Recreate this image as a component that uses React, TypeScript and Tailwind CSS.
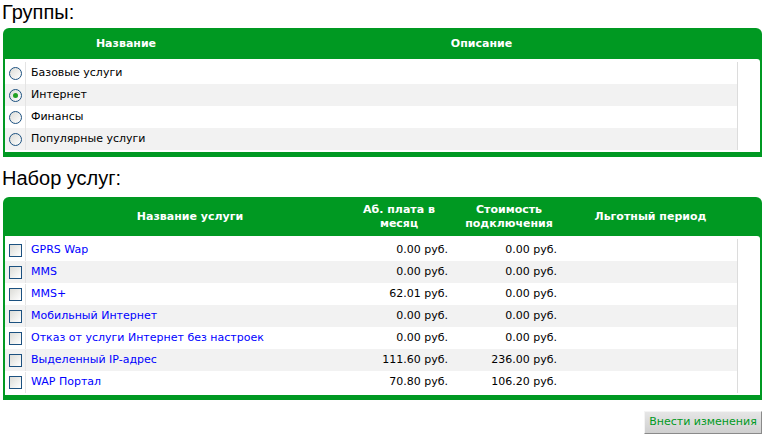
import { useState } from "react";

const groups = ["Базовые услуги", "Интернет", "Финансы", "Популярные услуги"];

const services = [
  { name: "GPRS Wap", fee: "0.00 руб.", cost: "0.00 руб." },
  { name: "MMS", fee: "0.00 руб.", cost: "0.00 руб." },
  { name: "MMS+", fee: "62.01 руб.", cost: "0.00 руб." },
  { name: "Мобильный Интернет", fee: "0.00 руб.", cost: "0.00 руб." },
  { name: "Отказ от услуги Интернет без настроек", fee: "0.00 руб.", cost: "0.00 руб." },
  { name: "Выделенный IP-адрес", fee: "111.60 руб.", cost: "236.00 руб." },
  { name: "WAP Портал", fee: "70.80 руб.", cost: "106.20 руб." },
];

const Radio = ({ checked, onClick }: { checked: boolean; onClick: () => void }) => (
  <span
    onClick={onClick}
    className="inline-flex h-[13px] w-[13px] items-center justify-center rounded-full border border-[#1c5180] bg-gradient-to-br from-[#dcdcd7] to-white"
  >
    {checked && <span className="h-[5px] w-[5px] rounded-full bg-[#21a121]" />}
  </span>
);

const Checkbox = () => (
  <span className="inline-block h-[13px] w-[13px] border border-[#1c5180] bg-gradient-to-br from-[#dcdcd7] to-white" />
);

export default function App() {
  const [group, setGroup] = useState(1);

  return (
    <div className="min-h-[445px] bg-white px-[3px] pr-[17px] font-['DejaVu_Sans',sans-serif] text-[11px] text-black">
      <h2 className="-ml-px h-[28px] font-['Liberation_Sans',sans-serif] text-[20px] leading-[25px]">
        Группы:
      </h2>

      <div className="rounded-t-[6px] bg-[#009922] px-[2px] pb-[5px]">
        <div className="flex h-[31px] items-center pt-px font-bold text-white">
          <div className="w-[21px]" />
          <div className="w-[200px] text-center">Название</div>
          <div className="flex-1 pr-[23px] text-center">Описание</div>
        </div>
        <div className="flex rounded-tr-[3px] bg-white pb-[2px] pt-[3px]">
          <div className="flex-1">
            {groups.map((g, i) => (
              <div
                key={g}
                className={`flex h-[22px] items-center ${i % 2 ? "bg-[#f2f2f2]" : "bg-white"}`}
              >
                <div className="flex h-full w-[21px] items-center justify-center border-r border-[#e4e4e4] pl-px">
                  <Radio checked={group === i} onClick={() => setGroup(i)} />
                </div>
                <div className="pl-[5px] pt-px">{g}</div>
              </div>
            ))}
          </div>
          <div className="w-[23px] border-l border-[#dcdcdc]" />
        </div>
      </div>

      <h2 className="-ml-px mt-[9px] h-[31px] font-['Liberation_Sans',sans-serif] text-[20px] leading-[25px]">
        Набор услуг:
      </h2>

      <div className="rounded-t-[6px] bg-[#009922] px-[2px] pb-[5px]">
        <div className="flex h-[39px] items-center pt-px text-center font-bold leading-[14px] text-white">
          <div className="w-[21px]" />
          <div className="w-[328px]">Название услуги</div>
          <div className="w-[100px] pr-[10px]">
            Аб. плата в<br />месяц
          </div>
          <div className="w-[110px]">
            Стоимость<br />подключения
          </div>
          <div className="flex-1 pr-[23px]">Льготный период</div>
        </div>
        <div className="flex rounded-tr-[3px] bg-white pb-[2px] pt-[3px]">
          <div className="flex-1">
            {services.map((s, i) => (
              <div
                key={s.name}
                className={`flex h-[22px] items-center pt-px ${i % 2 ? "bg-[#f2f2f2]" : "bg-white"}`}
              >
                <div className="flex h-full w-[21px] items-center justify-center border-r border-[#e4e4e4] pl-px">
                  <Checkbox />
                </div>
                <div className="w-[327px] pl-[5px]">
                  <a href="#" className="text-[#0000ff]">
                    {s.name}
                  </a>
                </div>
                <div className="w-[100px] pr-[5px] text-right">{s.fee}</div>
                <div className="w-[110px] pr-[6px] text-right">{s.cost}</div>
                <div className="flex-1" />
              </div>
            ))}
          </div>
          <div className="w-[23px] border-l border-[#dcdcdc]" />
        </div>
      </div>

      <div className="mt-[11px] flex justify-end">
        <button className="h-[23px] w-[118px] border border-b-[#8a8a8a] border-l-[#f4f4f4] border-r-[#8a8a8a] border-t-[#f4f4f4] bg-gradient-to-b from-[#e6e6e6] to-[#cfcfcf] text-[11px] text-[#009922]">
          Внести изменения
        </button>
      </div>
    </div>
  );
}
